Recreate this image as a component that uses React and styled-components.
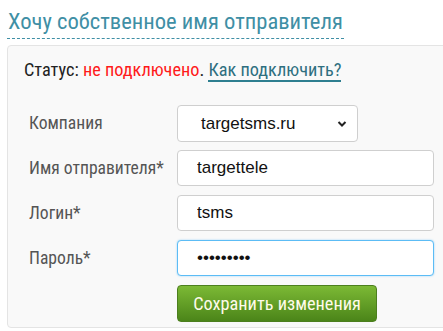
import React from 'react';
import styled, { createGlobalStyle } from 'styled-components';

const GlobalStyle = createGlobalStyle`
    html, body {
        margin: 0;
        padding: 0;
        background: #fff;
    }
    body {
        font-family: "Roboto Condensed", "Liberation Sans Narrow", Roboto, sans-serif;
        overflow: hidden;
    }
`;

const Page = styled.div`
    width: 443px;
    height: 331px;
    padding: 9px 0 0 7px;
    box-sizing: border-box;
    overflow: hidden;
`;

const Heading = styled.h2`
    display: inline-block;
    margin: 0 0 6px;
    padding: 0 1px 3px;
    font-weight: 400;
    font-size: 22.6px;
    line-height: 26px;
    color: #3f8fa5;
    border-bottom: 1px dashed #3f8fa5;
`;

const Panel = styled.div`
    width: 460px;
    height: 283px;
    box-sizing: border-box;
    padding: 13px 0 0 16px;
    background: #f9f9f9;
    border: 1px solid #e4e4e4;
    border-radius: 4px;
`;

const Status = styled.div`
    font-size: 18.3px;
    line-height: 21px;
    color: #222;
    margin-bottom: 25px;
`;

const Red = styled.span`
    color: #ff1a1a;
`;

const HelpLink = styled.a`
    color: #2e6f80;
    text-decoration: none;
    border-bottom: 2px solid #2e7f90;
`;

const Form = styled.div`
    display: grid;
    grid-template-columns: 148px 257px;
    grid-auto-rows: 36px;
    row-gap: 9px;
    padding-left: 5px;
`;

const Label = styled.label`
    display: flex;
    align-items: center;
    font-size: 17.6px;
    color: #555;
`;

const Field = styled.input`
    box-sizing: border-box;
    width: 257px;
    height: 36px;
    padding: 0 19px;
    font-family: "Liberation Sans", Arial, sans-serif;
    font-size: 17px;
    color: #111;
    background: #fff;
    border: 1px solid ${p => (p.$focused ? '#5cbcf5' : '#cfcfcf')};
    border-radius: 4px;
    box-shadow: ${p => (p.$focused ? '0 0 2px rgba(80, 180, 245, 0.6)' : 'none')};
    outline: none;
`;

const SelectBox = styled.div`
    position: relative;
    box-sizing: border-box;
    width: 181px;
    height: 37px;
    display: flex;
    align-items: center;
    padding-left: 23px;
    font-family: "Liberation Sans", Arial, sans-serif;
    font-size: 17px;
    color: #111;
    background: #fff;
    border: 1px solid #cfcfcf;
    border-radius: 4px;
`;

const Chevron = styled.svg`
    position: absolute;
    right: 10px;
    top: 14px;
`;

const SaveButton = styled.button`
    box-sizing: border-box;
    width: 200px;
    height: 37px;
    font-family: "Roboto Condensed", "Liberation Sans Narrow", Roboto, sans-serif;
    font-size: 18.3px;
    color: #fffbea;
    background: linear-gradient(#7cb935, #4b8519);
    border: 1px solid #4c7f1e;
    border-radius: 4px;
    cursor: pointer;
`;

const App = () => {
    return (
        <>
            <GlobalStyle />
            <Page>
                <Heading>Хочу собственное имя отправителя</Heading>
                <Panel>
                    <Status>
                        Статус: <Red>не подключено</Red>. <HelpLink href="#">Как подключить?</HelpLink>
                    </Status>
                    <Form>
                        <Label>Компания</Label>
                        <SelectBox>
                            targetsms.ru
                            <Chevron width="10" height="8" viewBox="0 0 10 8">
                                <path d="M1.5 2 L5 5.5 L8.5 2" fill="none" stroke="#222" strokeWidth="2" />
                            </Chevron>
                        </SelectBox>
                        <Label>Имя отправителя*</Label>
                        <Field defaultValue="targettele" />
                        <Label>Логин*</Label>
                        <Field defaultValue="tsms" />
                        <Label>Пароль*</Label>
                        <Field type="password" defaultValue="123456789" $focused />
                        <span />
                        <SaveButton>Сохранить изменения</SaveButton>
                    </Form>
                </Panel>
            </Page>
        </>
    );
};

export default App;
